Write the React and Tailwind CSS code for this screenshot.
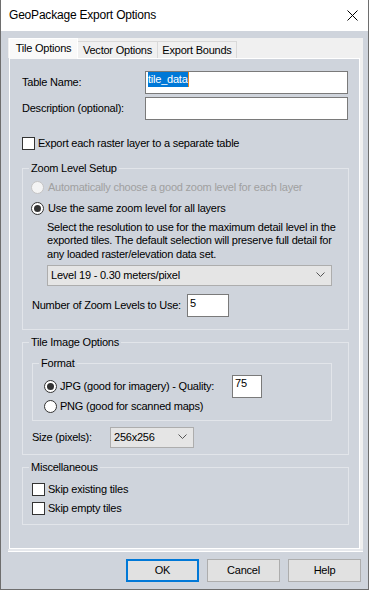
import React from 'react';

const FONT = "font-['Liberation_Sans',Arial,sans-serif]";

const Radio = ({ checked, disabled, label, gap = 'gap-[3px]' }) => (
    <div className={`flex items-center h-[13px] ${gap}`}>
        <div className={`w-[13px] h-[13px] rounded-full border flex items-center justify-center ${disabled ? 'border-[#c4c4c4] bg-[#f4f4f4]' : 'border-[#333] bg-white'}`}>
            {checked && <div className="w-[7px] h-[7px] rounded-full bg-[#333]" />}
        </div>
        <span className={disabled ? 'text-[#a0a0a0]' : 'text-black'}>{label}</span>
    </div>
);

const Check = ({ label }) => (
    <div className="flex items-center h-[13px] gap-[3px]">
        <div className="w-[13px] h-[13px] border border-[#333] bg-white" />
        <span>{label}</span>
    </div>
);

const Chevron = () => (
    <svg width="9" height="6" viewBox="0 0 9 6" className="shrink-0">
        <path d="M0.5 0.5 L4.5 4.5 L8.5 0.5" fill="none" stroke="#555" strokeWidth="1" />
    </svg>
);

const Dropdown = ({ value, className }) => (
    <div className={`h-[21px] border border-[#adadad] bg-[#e5e5e5] flex items-center justify-between pl-[3px] pr-[6px] ${className}`}>
        <span>{value}</span>
        <Chevron />
    </div>
);

const TextBox = ({ children, className }) => (
    <div className={`h-[23px] border border-[#7a7a7a] bg-white px-[2px] leading-[15px] ${className}`}>{children}</div>
);

export default function App() {
    return (
        <div className={`w-[369px] h-[590px] bg-[#cfd4dc] border-x border-b border-[#6e6e6e] flex flex-col text-[11px] tracking-[-0.22px] leading-[13px] text-black ${FONT}`}>
            {/* Title bar */}
            <div className="h-[31px] bg-white flex items-center justify-between pl-[8px] pr-[10px] shrink-0">
                <span className="text-[12px] tracking-[-0.2px]">GeoPackage Export Options</span>
                <svg width="11" height="11" viewBox="0 0 11 11">
                    <path d="M0.5 0.5 L10.5 10.5 M10.5 0.5 L0.5 10.5" stroke="#000" strokeWidth="1" />
                </svg>
            </div>

            {/* Tab control */}
            <div className="ml-[7px] mt-[7px] w-[355px] flex flex-col">
                <div className="h-[20px] bg-[#f0f0f0] flex items-start">
                    <div className="ml-[1px] w-[69px] h-[21px] bg-[#f9f9f9] border-x border-t border-white flex justify-center pt-[3px] relative z-10">Tile Options</div>
                    <div className="mt-[3px] w-[80px] h-[17px] border-t border-r border-[#d9d9d9] bg-[#f0f0f0] flex justify-center pt-[2px]">Vector Options</div>
                    <div className="mt-[3px] w-[79px] h-[17px] border-t border-r border-[#d9d9d9] bg-[#f0f0f0] flex justify-center pt-[2px]">Export Bounds</div>
                </div>
                <div className="flex">
                    <div className="ml-[1px] w-[351px] h-[491px] border border-white bg-[#cfd4dc] pl-[12px] pt-[12px] flex flex-col">
                        <div className="flex items-center h-[23px]">
                            <span className="w-[123px]">Table Name:</span>
                            <TextBox className="w-[203px]">
                                <span className="inline-block h-[15px] bg-[#0078d7] text-white border-r border-[#e8851c]">tile_data</span>
                            </TextBox>
                        </div>
                        <div className="flex items-center h-[23px] mt-[3px]">
                            <span className="w-[123px]">Description (optional):</span>
                            <TextBox className="w-[203px]" />
                        </div>
                        <div className="mt-[17px]">
                            <Check label="Export each raster layer to a separate table" />
                        </div>

                        {/* Zoom Level Setup */}
                        <fieldset className="mt-[12px] w-[327px] border border-[#e2e5ea] pl-[8px] pb-[12px]">
                            <legend className="ml-[-2px] px-[2px]">Zoom Level Setup</legend>
                            <div className="mt-[6px]">
                                <Radio disabled label="Automatically choose a good zoom level for each layer" gap="gap-[4px]" />
                            </div>
                            <div className="mt-[8px]">
                                <Radio checked label="Use the same zoom level for all layers" gap="gap-[4px]" />
                            </div>
                            <p className="ml-[16px] mt-[6px] leading-[13.3px]">
                                Select the resolution to use for the maximum detail level in the<br />
                                exported tiles. The default selection will preserve full detail for<br />
                                any loaded raster/elevation data set.
                            </p>
                            <Dropdown value="Level 19 - 0.30 meters/pixel" className="ml-[16px] mt-[4px] w-[285px]" />
                            <div className="flex items-center h-[23px] mt-[8px] ml-[1px]">
                                <span className="w-[155px]">Number of Zoom Levels to Use:</span>
                                <TextBox className="w-[42px] pt-[1px]">5</TextBox>
                            </div>
                        </fieldset>

                        {/* Tile Image Options */}
                        <fieldset className="mt-[6px] w-[327px] border border-[#e2e5ea] pl-[9px] pb-[6px]">
                            <legend className="ml-[-3px] px-[2px]">Tile Image Options</legend>
                            <fieldset className="mt-[8px] w-[300px] border border-[#e2e5ea] pl-[11px] pb-[7px]">
                                <legend className="ml-[-5px] px-[2px]">Format</legend>
                                <div className="mt-[6px] flex items-center h-[22px]">
                                    <div className="w-[188px]">
                                        <Radio checked label="JPG (good for imagery) - Quality:" />
                                    </div>
                                    <TextBox className="w-[30px] h-[22px]">75</TextBox>
                                </div>
                                <div className="mt-[2px]">
                                    <Radio label="PNG (good for scanned maps)" />
                                </div>
                            </fieldset>
                            <div className="mt-[6px] flex items-center h-[21px]">
                                <span className="w-[78px]">Size (pixels):</span>
                                <Dropdown value="256x256" className="w-[84px]" />
                            </div>
                        </fieldset>

                        {/* Miscellaneous */}
                        <fieldset className="mt-[6px] w-[327px] border border-[#e2e5ea] pl-[9px] pb-[9px]">
                            <legend className="ml-[-3px] px-[2px]">Miscellaneous</legend>
                            <div className="mt-[9px]">
                                <Check label="Skip existing tiles" />
                            </div>
                            <div className="mt-[6px]">
                                <Check label="Skip empty tiles" />
                            </div>
                        </fieldset>
                    </div>
                    <div className="w-[3px] bg-[#f0f0f0]" />
                </div>
                <div className="h-[2px] bg-[#e6e8ec]" />
                <div className="h-[1px] bg-white" />
            </div>

            {/* Buttons */}
            <div className="mt-[7px] flex justify-end gap-[8px] pr-[7px]">
                <button className="w-[73px] h-[23px] border-2 border-[#0078d7] bg-[#e1e1e1]">OK</button>
                <button className="w-[73px] h-[23px] border border-[#adadad] bg-[#e1e1e1]">Cancel</button>
                <button className="w-[73px] h-[23px] border border-[#adadad] bg-[#e1e1e1]">Help</button>
            </div>
        </div>
    );
}
